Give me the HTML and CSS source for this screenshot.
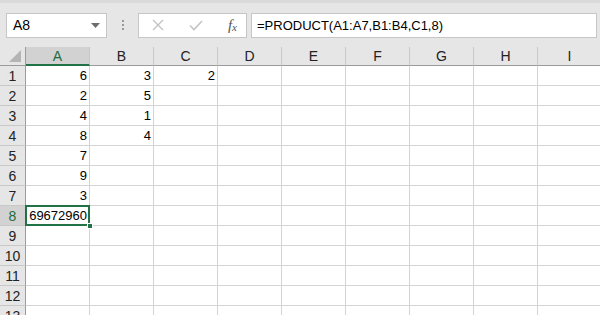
FILE: index.html
```html
<!DOCTYPE html>
<html lang="en">
<head>
    <meta charset="UTF-8">
    <title>PRODUCT function</title>
    <link rel="stylesheet" href="styles.css">
</head>
<body>
    <div class="toolbar">
        <div class="name-box">
            <span>A8</span>
            <svg class="caret" width="9" height="5" viewBox="0 0 9 5"><path d="M0 0h9L4.5 5z" fill="#6d6d6d"/></svg>
        </div>
        <div class="grip"><i></i><i></i><i></i></div>
        <div class="fx-box">
            <svg width="14" height="14" viewBox="0 0 14 14"><path d="M2 2l10 10M12 2L2 12" stroke="#c4c4c4" stroke-width="1.4" fill="none"/></svg>
            <svg width="14" height="14" viewBox="0 0 14 14"><path d="M1 7.5l4 4L13 3" stroke="#c4c4c4" stroke-width="1.6" fill="none"/></svg>
            <span class="fx">f<sub>x</sub></span>
        </div>
        <div class="formula">=PRODUCT(A1:A7,B1:B4,C1,8)</div>
    </div>

    <div class="sheet" id="sheet">
        <div class="corner"></div>
    </div>

    <script>
        // column letters and the values that sit in each cell
        const COLS = ['A', 'B', 'C', 'D', 'E', 'F', 'G', 'H', 'I'];
        const DATA = {
            1: { A: 6, B: 3, C: 2 },
            2: { A: 2, B: 5 },
            3: { A: 4, B: 1 },
            4: { A: 8, B: 4 },
            5: { A: 7 },
            6: { A: 9 },
            7: { A: 3 },
            8: { A: 69672960 }
        };

        const sheet = document.getElementById('sheet');

        function addCell(cls, text) {
            const el = document.createElement('div');
            el.className = cls;
            if (text !== undefined) el.textContent = text;
            sheet.appendChild(el);
            return el;
        }

        COLS.forEach(c => addCell(c === 'A' ? 'col-head selected' : 'col-head', c));

        for (let r = 1; r <= 13; r++) {
            addCell(r === 8 ? 'row-head selected' : 'row-head', r);
            COLS.forEach(c => {
                const row = DATA[r] || {};
                const cell = addCell('cell', row[c]);
                if (r === 8 && c === 'A') cell.classList.add('active');
            });
        }
    </script>
</body>
</html>
```

FILE: styles.css
```css
body {
    margin: 0;
    width: 600px;
    height: 315px;
    overflow: hidden;
    background: #fff;
    font-family: "Liberation Sans", Arial, sans-serif;
    color: #000;
}
.toolbar {
    display: flex;
    align-items: center;
    height: 47px;
    padding: 0 3px 0 6px;
    box-sizing: border-box;
    background: #e6e6e6;
    border-top: 3px solid #dadada;
}
.name-box,
.fx-box,
.formula {
    height: 25px;
    box-sizing: border-box;
    background: #fff;
    border: 1px solid #c6c6c6;
    display: flex;
    align-items: center;
}
.name-box {
    width: 101px;
    padding: 0 6px;
    justify-content: space-between;
    font-size: 14px;
}
.grip {
    width: 31px;
    display: flex;
    flex-direction: column;
    align-items: center;
    gap: 2px;
}
.grip i {
    width: 2px;
    height: 2px;
    background: #9a9a9a;
}
.fx-box {
    width: 109px;
    padding: 0 9px 0 12px;
    justify-content: space-between;
}
.fx {
    font-family: "Liberation Serif", serif;
    font-style: italic;
    font-size: 15px;
    color: #555;
}
.fx sub {
    font-size: 11px;
    vertical-align: -1px;
}
.formula {
    flex: 1;
    margin-left: 4px;
    padding-left: 5px;
    font-size: 13px;
}
.sheet {
    display: grid;
    grid-template-columns: 26px repeat(9, 64px);
    grid-template-rows: 19px;
    grid-auto-rows: 20px;
    font-size: 13px;
}
.corner {
    background: #e6e6e6;
    border-right: 1px solid #9b9b9b;
    border-bottom: 1px solid #9b9b9b;
    position: relative;
}
.corner::after {
    content: "";
    position: absolute;
    right: 4px;
    bottom: 3px;
    border-style: solid;
    border-width: 0 0 12px 12px;
    border-color: transparent transparent #b4b4b4 transparent;
}
.col-head,
.row-head {
    background: #e6e6e6;
    color: #222;
    display: flex;
    align-items: center;
    justify-content: center;
    box-sizing: border-box;
    font-size: 14px;
}
.col-head {
    border-right: 1px solid #c8c8c8;
    border-bottom: 1px solid #9b9b9b;
}
.row-head {
    border-right: 1px solid #9b9b9b;
    border-bottom: 1px solid #c8c8c8;
}
.col-head.selected {
    background: #d2d2d2;
    color: #1e6b40;
    border-bottom: 2px solid #217346;
}
.row-head.selected {
    background: #d2d2d2;
    color: #1e6b40;
}
.cell {
    box-sizing: border-box;
    border-right: 1px solid #d4d4d4;
    border-bottom: 1px solid #d4d4d4;
    text-align: right;
    padding-right: 2px;
    line-height: 20px;
}
.cell.active {
    position: relative;
}
.cell.active::before {
    content: "";
    position: absolute;
    left: -1px;
    top: -1px;
    right: -1px;
    bottom: -1px;
    border: 2px solid #217346;
}
.cell.active::after {
    content: "";
    position: absolute;
    right: -4px;
    bottom: -4px;
    width: 6px;
    height: 6px;
    background: #217346;
    border: 1px solid #fff;
    box-sizing: border-box;
}
```
